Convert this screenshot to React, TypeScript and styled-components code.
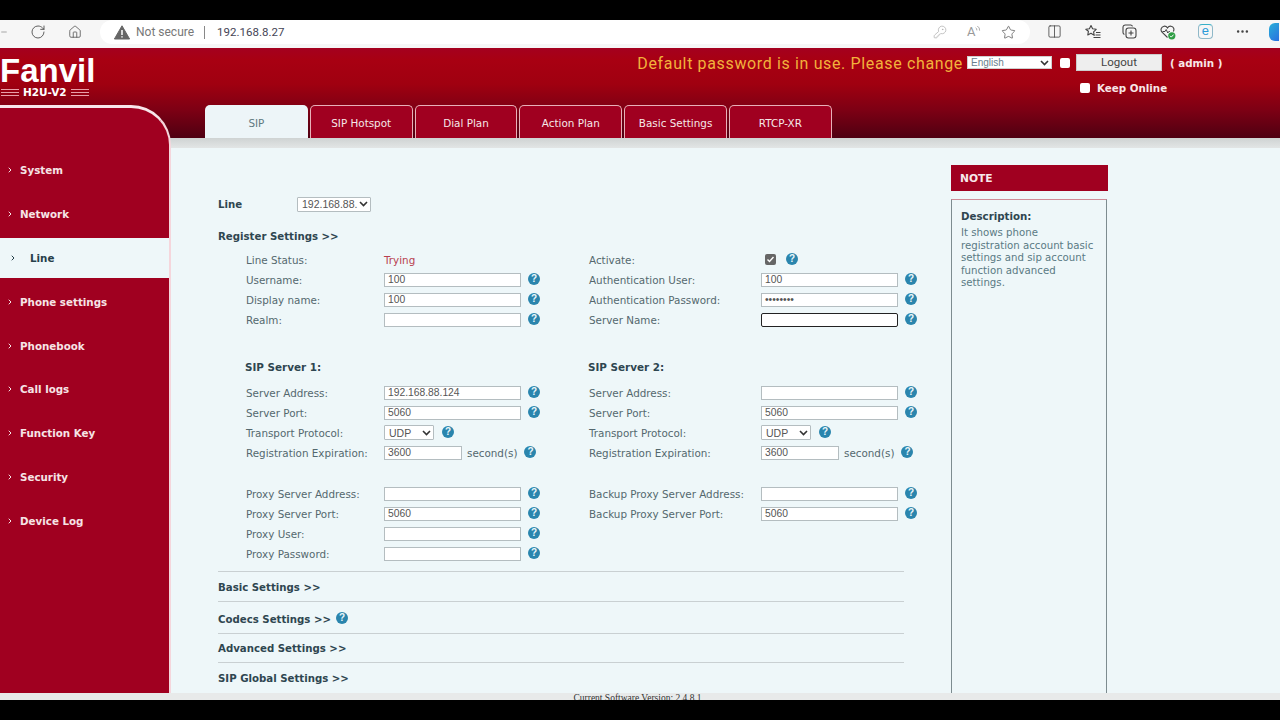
import React from 'react';
import styled, { createGlobalStyle } from 'styled-components';
import { RotateCw, Home, KeyRound, Star, Columns2, MoreHorizontal, ChevronRight, Minus } from 'lucide-react';

const RED = '#a00020';
const SANS = '"DejaVu Sans", Verdana, sans-serif';

const GlobalStyle = createGlobalStyle`
  html, body { margin: 0; padding: 0; background: #000; }
  * { box-sizing: border-box; }
  body { font-family: ${SANS}; }
`;

const Screen = styled.div`
  width: 1280px;
  height: 720px;
  display: flex;
  flex-direction: column;
  background: #000;
  overflow: hidden;
`;

const Letterbox = styled.div<{ $h: number }>`
  height: ${(p) => p.$h}px;
  flex: none;
  background: #000;
  position: relative;
  z-index: 2;
`;

const Toolbar = styled.div`
  height: 28px;
  flex: none;
  display: flex;
  align-items: flex-start;
  background: #f6f6f6;
  color: #555;
`;

const ToolIcon = styled.span<{ $w: number }>`
  width: ${(p) => p.$w}px;
  height: 23px;
  flex: none;
  display: flex;
  align-items: center;
  justify-content: center;
`;

const AddressBar = styled.div`
  width: 930px;
  height: 24px;
  margin-left: 18px;
  display: flex;
  align-items: center;
  background: #fff;
  border-radius: 12px;
  padding-left: 14px;
  font-family: 'Roboto', sans-serif;
  font-size: 12px;
`;

const NotSecure = styled.span`
  color: #777;
  margin-left: 6px;
`;

const Divider = styled.span`
  width: 1px;
  height: 13px;
  background: #888;
  margin: 0 12px 0 10px;
`;

const Url = styled.span`
  color: #445;
  font-size: 11.5px;
  flex: 1;
`;

const AddressIcons = styled.div`
  display: flex;
  align-items: center;
  gap: 20px;
  padding-right: 14px;
  color: #aaa;
`;

const ReadAloud = styled.span`
  width: 14px;
  display: flex;
  align-items: flex-start;
  font-size: 13px;
  line-height: 14px;
  color: #999;
`;

const RightTools = styled.div`
  flex: 1;
  height: 23px;
  display: flex;
  align-items: center;
  gap: 22.7px;
  padding-left: 17px;
  overflow: hidden;
  color: #444;

  svg {
    flex: none;
  }
`;

const BadgeIcon = styled.span`
  width: 15px;
  height: 15px;
  flex: none;
  display: flex;
`;

const EdgeTile = styled.span`
  width: 15px;
  height: 15px;
  flex: none;
  border: 1.5px solid #8fb8c8;
  border-top-color: #38b0c8;
  border-radius: 4px;
  color: #2a9ad8;
  font-family: 'Liberation Sans', sans-serif;
  font-size: 13px;
  line-height: 11px;
  text-align: center;
`;

const CopilotTab = styled.span`
  width: 10px;
  height: 18px;
  flex: none;
  margin-left: -4px;
  border-radius: 6px 0 0 6px;
  background: linear-gradient(135deg, #28b0d8, #2a70e0);
`;

const Page = styled.div`
  flex: 1;
  min-height: 0;
  display: grid;
  grid-template-columns: 172px 1fr;
  grid-template-rows: 1fr 7px;
  background:
    linear-gradient(#a4001f 0, #a80012 12px, #a00010 36px, #7d0014 62px, #4f0012 90px, #cfd3d3 90px, #e2e5e5 100px, transparent 100px),
    #eef7f9;
`;

const LeftColumn = styled.div`
  display: flex;
  flex-direction: column;
  min-height: 0;
`;

const Logo = styled.div`
  height: 57px;
  flex: none;
  padding-top: 7px;
  color: #fff;
  overflow: hidden;
`;

const LogoWord = styled.div`
  font-family: 'Liberation Sans', sans-serif;
  font-weight: 700;
  font-size: 33px;
  line-height: 31px;
`;

const LogoSub = styled.div`
  display: flex;
  align-items: center;
  gap: 4px;
  font-family: ${SANS};
  font-weight: 700;
  font-size: 10.5px;
  line-height: 12px;
  padding-left: 1px;
`;

const LogoRule = styled.span`
  width: 18px;
  height: 7px;
  background: repeating-linear-gradient(#e8a0a8 0, #e8a0a8 1px, transparent 1px, transparent 3px);
`;

const SideNav = styled.nav`
  flex: 1;
  width: 171px;
  background: ${RED};
  border-top: 3px solid #f7e6ea;
  border-right: 2px solid #f5d6dc;
  border-top-right-radius: 40px;
  padding-top: 43px;
`;

const NavItem = styled.div<{ $active?: boolean }>`
  height: ${(p) => (p.$active ? '40px' : '38px')};
  margin: ${(p) => (p.$active ? '-1px 0 4.9px' : '0 0 5.9px')};
  display: flex;
  align-items: center;
  padding-left: ${(p) => (p.$active ? '9px' : '6px')};
  background: ${(p) => (p.$active ? '#eef7f9' : 'transparent')};
  color: ${(p) => (p.$active ? '#26404a' : '#f6e4e6')};
  font-size: 10.3px;
  font-weight: 700;
`;

const NavArrow = styled.span<{ $active?: boolean }>`
  width: ${(p) => (p.$active ? 21 : 14)}px;
  display: flex;
  align-items: center;
`;

const RightColumn = styled.div`
  display: flex;
  flex-direction: column;
  min-height: 0;
  min-width: 0;
`;

const HeaderArea = styled.div`
  height: 57px;
  flex: none;
  display: grid;
  grid-template-columns: 791px 1fr;
`;

const Warning = styled.div`
  text-align: right;
  font-family: 'Roboto', sans-serif;
  font-size: 16px;
  letter-spacing: 0.64px;
  color: #f2b23c;
  line-height: 31px;
  height: 31px;
`;

const HeaderControls = styled.div`
  display: flex;
  flex-direction: column;
  padding-left: 4px;
`;

const HeaderLine = styled.div`
  display: flex;
  align-items: center;
  height: 29px;
`;

const LangSelect = styled.div`
  width: 85px;
  height: 13px;
  background: #fff;
  border: 1px solid #cfcfcf;
  font-family: 'Liberation Sans', sans-serif;
  font-size: 10px;
  line-height: 11px;
  color: #6a7f8e;
  padding-left: 3px;
  display: flex;
  align-items: center;
  justify-content: space-between;
`;

const WhiteBox = styled.span<{ $ml?: number }>`
  width: 10px;
  height: 10px;
  flex: none;
  background: #fff;
  border-radius: 2px;
  margin-left: ${(p) => p.$ml ?? 0}px;
`;

const LogoutButton = styled.div`
  width: 86px;
  height: 17px;
  margin-left: 6px;
  background: #eeeeee;
  border: 1px solid #ccc;
  color: #444;
  font-family: 'Roboto', sans-serif;
  font-size: 11.5px;
  line-height: 14px;
  text-align: center;
`;

const HeaderBold = styled.span<{ $ml: number }>`
  margin-left: ${(p) => p.$ml}px;
  color: #f8e6e6;
  font-size: 10.3px;
  font-weight: 700;
  white-space: nowrap;
`;

const KeepLine = styled(HeaderLine)`
  height: 22px;
  padding-left: 113px;
`;

const Tabs = styled.div`
  height: 33px;
  flex: none;
  display: flex;
  gap: 2px;
  padding-left: 33px;
`;

const Tab = styled.div<{ $active?: boolean }>`
  width: 102.8px;
  display: flex;
  align-items: center;
  justify-content: center;
  padding-top: 2px;
  border-radius: 5px 5px 0 0;
  font-size: 10.4px;
  color: ${(p) => (p.$active ? '#5f7a80' : '#f6e8e8')};
  background: ${(p) => (p.$active ? '#edf5f8' : '#a00020')};
  border: ${(p) => (p.$active ? 'none' : '1px solid #e8b0b8')};
  border-bottom: none;
`;

const Main = styled.div`
  flex: 1;
  min-height: 0;
  display: flex;
  padding-top: 27px;
`;

const Content = styled.div`
  width: 778px;
  flex: none;
  padding-left: 46px;
  padding-top: 31px;
  color: #54686e;
  overflow: hidden;
`;

const LineRow = styled.div`
  display: flex;
  align-items: center;
  height: 16px;
`;

const SectionTitle = styled.span`
  color: #2e4650;
  font-size: 10.2px;
  font-weight: 700;
  display: inline-flex;
  align-items: center;
  gap: 4px;
  white-space: nowrap;
`;

const LineLabel = styled(SectionTitle)`
  width: 79px;
`;

const FakeSelect = styled.div<{ $w: number }>`
  width: ${(p) => p.$w}px;
  height: 15px;
  background: #fff;
  border: 1px solid #b4bdc0;
  border-radius: 1px;
  font-family: 'Liberation Sans', sans-serif;
  font-size: 10.5px;
  color: #555;
  padding-left: 4px;
  display: flex;
  align-items: center;
  justify-content: space-between;
  white-space: nowrap;
  overflow: hidden;
`;

const SelectChevron = styled.svg`
  width: 9px;
  height: 6px;
  flex: none;
  margin-right: 2px;
`;

const RegisterTitle = styled.div`
  height: 16px;
  margin-top: 16px;
  display: flex;
  align-items: center;
`;

const FormGrid = styled.div`
  display: grid;
  grid-template-columns: 343px 1fr;
  padding-left: 28px;
  margin-top: 5.7px;
`;

const FormColumn = styled.div<{ $labelWidth: number }>`
  display: flex;
  flex-direction: column;
  --label-width: ${(p) => p.$labelWidth}px;
`;

const Row = styled.div`
  height: 20.2px;
  display: flex;
  align-items: center;
  font-size: 10.37px;
  white-space: nowrap;
`;

const RowLabel = styled.span`
  width: var(--label-width);
  flex: none;
`;

const Input = styled.div<{ $w?: number; $focus?: boolean }>`
  width: ${(p) => p.$w ?? 137}px;
  height: 14px;
  flex: none;
  background: #fff;
  border: ${(p) => (p.$focus ? '1.5px solid #222' : '1px solid #b4bdc0')};
  border-radius: ${(p) => (p.$focus ? '2px' : '0')};
  font-family: 'Liberation Sans', sans-serif;
  font-size: 10.3px;
  line-height: 12px;
  color: #555;
  padding-left: 3px;
`;

const Help = styled.span<{ $ml?: number }>`
  width: 12px;
  height: 12px;
  flex: none;
  margin-left: ${(p) => p.$ml ?? 7}px;
  margin-top: -2px;
  border-radius: 50%;
  background: #2a85ad;
  color: #eaf6fa;
  font-family: 'Liberation Sans', sans-serif;
  font-size: 10px;
  font-weight: 700;
  line-height: 12px;
  text-align: center;
`;

const Unit = styled.span`
  margin-left: 5px;
`;

const StatusValue = styled.span`
  color: #b84050;
`;

const CheckBox = styled.span`
  width: 11px;
  height: 11px;
  margin-left: 4px;
  background: #666;
  border-radius: 2px;
  display: flex;
  align-items: center;
  justify-content: center;
`;

const ServerTitle = styled.div`
  font-size: 10.4px;
  font-weight: 700;
  color: #2e4650;
  height: 18px;
  margin-top: 28px;
  margin-bottom: 6px;
  margin-left: -1px;
  display: flex;
  align-items: center;
`;

const Gap = styled.div<{ $h: number }>`
  height: ${(p) => p.$h}px;
`;

const Collapse = styled.div<{ $h: number; $pt?: number }>`
  width: 686px;
  height: ${(p) => p.$h}px;
  border-top: 1px solid #c9d0d2;
  padding-top: ${(p) => p.$pt ?? 1}px;
  display: flex;
  align-items: center;
`;

const Aside = styled.aside`
  width: 157px;
  margin-left: 1px;
  display: flex;
  flex-direction: column;
  min-height: 0;
`;

const NoteHead = styled.div`
  height: 26px;
  flex: none;
  background: ${RED};
  color: #f8e8ea;
  font-size: 10.7px;
  font-weight: 700;
  display: flex;
  align-items: center;
  padding-left: 9px;
`;

const NoteBox = styled.div`
  flex: 1;
  margin-top: 8px;
  width: 156px;
  border: 1px solid #7d8c90;
  border-top-color: #d08a96;
  border-bottom: none;
  padding: 10px 9px;
  font-size: 10.2px;
  line-height: 12.4px;
  color: #5a7a84;
`;

const NoteTitle = styled.div`
  font-size: 10.25px;
  font-weight: 700;
  color: #2e4650;
  margin-bottom: 5px;
`;

const Footer = styled.div`
  grid-column: 1 / 3;
  display: flex;
  justify-content: center;
  height: 7px;
  overflow: hidden;
  background: #e8eaea;
  padding-right: 5px;
  font-family: 'Liberation Serif', serif;
  font-size: 9.5px;
  line-height: 10px;
  color: #333;
`;

const NAV = ['System', 'Network', 'Line', 'Phone settings', 'Phonebook', 'Call logs', 'Function Key', 'Security', 'Device Log'];
const TABS = ['SIP', 'SIP Hotspot', 'Dial Plan', 'Action Plan', 'Basic Settings', 'RTCP-XR'];

const Chevron = () => (
  <SelectChevron viewBox="0 0 9 6">
    <path d="M1 1l3.5 3.5L8 1" fill="none" stroke="#333" strokeWidth="1.6" />
  </SelectChevron>
);

const AlertIcon = () => (
  <svg width="16" height="15" viewBox="0 0 16 15">
    <path d="M8 .8 15.6 14H.4z" fill="#666" stroke="#666" strokeLinejoin="round" />
    <path d="M8 5v5M8 11.2v1.4" stroke="#fff" strokeWidth="1.5" />
  </svg>
);

const FavoritesIcon = () => (
  <BadgeIcon>
    <svg width="16" height="15" viewBox="0 0 16 15" fill="none" stroke="#444" strokeWidth="1.1">
      <path d="M6 1.5l1.6 3.3 3.6.5-2.6 2.5.6 3.6L6 9.2l-3.2 1.7.6-3.6L.8 5.3l3.6-.5z" strokeLinejoin="round" />
      <path d="M11 8.5h4.5M10.5 11h5M8.5 13.5h7" />
    </svg>
  </BadgeIcon>
);

const CollectionsIcon = () => (
  <BadgeIcon>
    <svg width="15" height="15" viewBox="0 0 15 15" fill="none" stroke="#444" strokeWidth="1.1">
      <rect x="4" y="4" width="10" height="10" rx="2.5" />
      <path d="M2.4 10.5A2 2 0 0 1 1 8.6V3.2A2.2 2.2 0 0 1 3.2 1h5.4a2 2 0 0 1 1.9 1.4" />
      <path d="M9 6.5v5M6.5 9h5" />
    </svg>
  </BadgeIcon>
);

const HealthIcon = () => (
  <BadgeIcon>
    <svg width="16" height="16" viewBox="0 0 16 16" fill="none">
      <path d="M7.5 13.5 2 8.2C.2 6.3 1 2.6 4 2.2c1.5-.2 2.7.5 3.5 1.7C8.3 2.7 9.5 2 11 2.2c2.8.4 3.6 3.4 2.3 5.3" stroke="#444" strokeWidth="1.1" />
      <path d="M2.5 7.5H5l1.2-2 1.6 3.5 1-1.500h1" stroke="#444" strokeWidth="1" />
      <circle cx="11.8" cy="11.8" r="3.6" fill="#2f9e44" />
      <path d="M10 11.8l1.3 1.3 2.3-2.5" stroke="#fff" strokeWidth="1" />
    </svg>
  </BadgeIcon>
);

const TextRow = ({ label, value = '', focus = false }: { label: string; value?: string; focus?: boolean }) => (
  <Row>
    <RowLabel>{label}</RowLabel>
    <Input $focus={focus}>{value}</Input>
    <Help>?</Help>
  </Row>
);

const ServerBlock = ({ title, address }: { title: string; address: string }) => (
  <>
    <ServerTitle>{title}</ServerTitle>
    <TextRow label="Server Address:" value={address} />
    <TextRow label="Server Port:" value="5060" />
    <Row>
      <RowLabel>Transport Protocol:</RowLabel>
      <FakeSelect $w={50}>
        UDP
        <Chevron />
      </FakeSelect>
      <Help $ml={8}>?</Help>
    </Row>
    <Row>
      <RowLabel>Registration Expiration:</RowLabel>
      <Input $w={78}>3600</Input>
      <Unit>second(s)</Unit>
      <Help $ml={7}>?</Help>
    </Row>
  </>
);

export default function App() {
  return (
    <Screen>
      <GlobalStyle />
      <Letterbox $h={20} />
      <Toolbar>
        <ToolIcon $w={8}>
          <Minus size={14} strokeWidth={1.5} />
        </ToolIcon>
        <ToolIcon $w={60}>
          <RotateCw size={16} strokeWidth={1.4} />
        </ToolIcon>
        <ToolIcon $w={14}>
          <Home size={16} strokeWidth={1.4} />
        </ToolIcon>
        <AddressBar>
          <AlertIcon />
          <NotSecure>Not secure</NotSecure>
          <Divider />
          <Url>192.168.8.27</Url>
          <AddressIcons>
            <KeyRound size={14} strokeWidth={1.2} />
            <ReadAloud>
              A
              <svg width="6" height="8" viewBox="0 0 6 8" fill="none" stroke="#999" strokeWidth="0.9">
                <path d="M0.5 2.5a3 3 0 0 1 1.5 3M2.5 0.8a5 5 0 0 1 2.5 5" />
              </svg>
            </ReadAloud>
            <Star size={15} strokeWidth={1.2} color="#555" />
          </AddressIcons>
        </AddressBar>
        <RightTools>
          <Columns2 size={15} strokeWidth={1.3} />
          <FavoritesIcon />
          <CollectionsIcon />
          <HealthIcon />
          <EdgeTile>e</EdgeTile>
          <MoreHorizontal size={15} />
          <CopilotTab />
        </RightTools>
      </Toolbar>
      <Page>
        <LeftColumn>
          <Logo>
            <LogoWord>Fanvil</LogoWord>
            <LogoSub>
              <LogoRule />
              H2U-V2
              <LogoRule />
            </LogoSub>
          </Logo>
          <SideNav>
            {NAV.map((item) => (
              <NavItem key={item} $active={item === 'Line'}>
                <NavArrow $active={item === 'Line'}>
                  <ChevronRight size={8} strokeWidth={3} />
                </NavArrow>
                {item}
              </NavItem>
            ))}
          </SideNav>
        </LeftColumn>
        <RightColumn>
          <HeaderArea>
            <Warning>Default password is in use. Please change</Warning>
            <HeaderControls>
              <HeaderLine>
                <LangSelect>
                  English
                  <Chevron />
                </LangSelect>
                <WhiteBox $ml={8} />
                <LogoutButton>Logout</LogoutButton>
                <HeaderBold $ml={8}>( admin )</HeaderBold>
              </HeaderLine>
              <KeepLine>
                <WhiteBox />
                <HeaderBold $ml={7}>Keep Online</HeaderBold>
              </KeepLine>
            </HeaderControls>
          </HeaderArea>
          <Tabs>
            {TABS.map((tab) => (
              <Tab key={tab} $active={tab === 'SIP'}>
                {tab}
              </Tab>
            ))}
          </Tabs>
          <Main>
            <Content>
              <LineRow>
                <LineLabel>Line</LineLabel>
                <FakeSelect $w={74}>
                  192.168.88.
                  <Chevron />
                </FakeSelect>
              </LineRow>
              <RegisterTitle>
                <SectionTitle>Register Settings &gt;&gt;</SectionTitle>
              </RegisterTitle>
              <FormGrid>
                <FormColumn $labelWidth={138}>
                  <Row>
                    <RowLabel>Line Status:</RowLabel>
                    <StatusValue>Trying</StatusValue>
                  </Row>
                  <TextRow label="Username:" value="100" />
                  <TextRow label="Display name:" value="100" />
                  <TextRow label="Realm:" />
                  <ServerBlock title="SIP Server 1:" address="192.168.88.124" />
                  <Gap $h={20.5} />
                  <TextRow label="Proxy Server Address:" />
                  <TextRow label="Proxy Server Port:" value="5060" />
                  <TextRow label="Proxy User:" />
                  <TextRow label="Proxy Password:" />
                </FormColumn>
                <FormColumn $labelWidth={172}>
                  <Row>
                    <RowLabel>Activate:</RowLabel>
                    <CheckBox>
                      <svg width="9" height="9" viewBox="0 0 9 9">
                        <path d="M1.5 4.5l2 2 4-4.5" fill="none" stroke="#fff" strokeWidth="1.4" />
                      </svg>
                    </CheckBox>
                    <Help $ml={10}>?</Help>
                  </Row>
                  <TextRow label="Authentication User:" value="100" />
                  <TextRow label="Authentication Password:" value="••••••••" />
                  <TextRow label="Server Name:" focus />
                  <ServerBlock title="SIP Server 2:" address="" />
                  <Gap $h={20.5} />
                  <TextRow label="Backup Proxy Server Address:" />
                  <TextRow label="Backup Proxy Server Port:" value="5060" />
                </FormColumn>
              </FormGrid>
              <Gap $h={6.2} />
              <Collapse $h={30} $pt={2}>
                <SectionTitle>Basic Settings &gt;&gt;</SectionTitle>
              </Collapse>
              <Collapse $h={32} $pt={4}>
                <SectionTitle>
                  Codecs Settings &gt;&gt;
                  <Help $ml={1}>?</Help>
                </SectionTitle>
              </Collapse>
              <Collapse $h={29}>
                <SectionTitle>Advanced Settings &gt;&gt;</SectionTitle>
              </Collapse>
              <Collapse $h={31}>
                <SectionTitle>SIP Global Settings &gt;&gt;</SectionTitle>
              </Collapse>
            </Content>
            <Aside>
              <NoteHead>NOTE</NoteHead>
              <NoteBox>
                <NoteTitle>Description:</NoteTitle>
                It shows phone registration account basic settings and sip account function advanced settings.
              </NoteBox>
            </Aside>
          </Main>
        </RightColumn>
        <Footer>Current Software Version: 2.4.8.1</Footer>
      </Page>
      <Letterbox $h={20} />
    </Screen>
  );
}
